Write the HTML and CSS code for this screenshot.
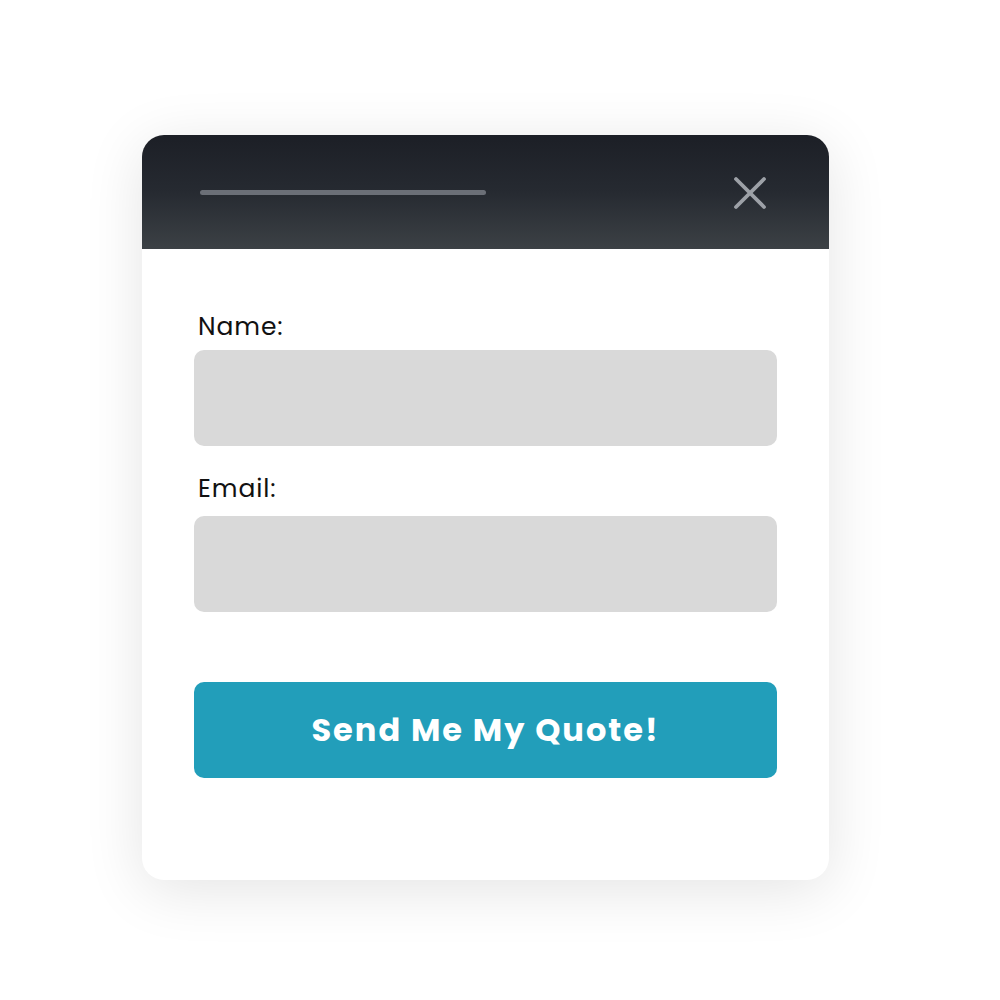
FILE: index.html
```html
<!DOCTYPE html>
<html>
<head>
<meta charset="utf-8">
<link rel="stylesheet" href="styles.css">
</head>
<body>
<div class="card">
  <div class="header">
    <div class="bar"></div>
    <svg class="close" width="34" height="34" viewBox="0 0 34 34"><path d="M3 3 L31 31 M31 3 L3 31" stroke="#9da1a7" stroke-width="3.8" stroke-linecap="round"/></svg>
  </div>
  <div class="body">
    <label class="label">Name:</label>
    <div class="input"></div>
    <label class="label second">Email:</label>
    <div class="input"></div>
    <div class="button">Send Me My Quote!</div>
  </div>
</div>
</body>
</html>
```
FILE: styles.css
```css
html, body { margin: 0; padding: 0; background: #ffffff; }
body { width: 1000px; height: 1000px; font-family: "Poppins", "Inter", "Noto Sans", sans-serif; }
.card {
  margin-left: 142px;
  margin-top: 135px;
  width: 687px;
  height: 745px;
  background: #fff;
  border-radius: 22px;
  overflow: hidden;
  box-shadow: 0 10px 60px rgba(0,0,0,0.11);
  display: flex;
  flex-direction: column;
}
.header {
  height: 114px;
  background: linear-gradient(180deg, #1c1f26 0%, #262a31 50%, #3c4145 100%);
  display: flex;
  align-items: center;
  justify-content: space-between;
  padding: 0 62px 0 58px;
  box-sizing: border-box;
}
.bar { width: 286px; height: 5px; border-radius: 3px; background: #6b6f77; margin-top: 1px; }
.close { display: block; margin-top: 2px; }
.body { padding: 61px 52px 0 52px; display: flex; flex-direction: column; }
.label { font-size: 25px; line-height: 34px; letter-spacing: 0.9px; color: #111; margin-bottom: 6px; padding-left: 4px; }
.label.second { margin-top: 26px; margin-bottom: 10px; }
.input { height: 96px; background: #d9d9d9; border-radius: 10px; }
.button {
  margin-top: 70px;
  height: 96px;
  background: #229eba;
  border-radius: 10px;
  color: #fff;
  font-weight: 700;
  font-size: 32px;
  letter-spacing: 2px;
  display: flex;
  align-items: center;
  justify-content: center;
}
```
